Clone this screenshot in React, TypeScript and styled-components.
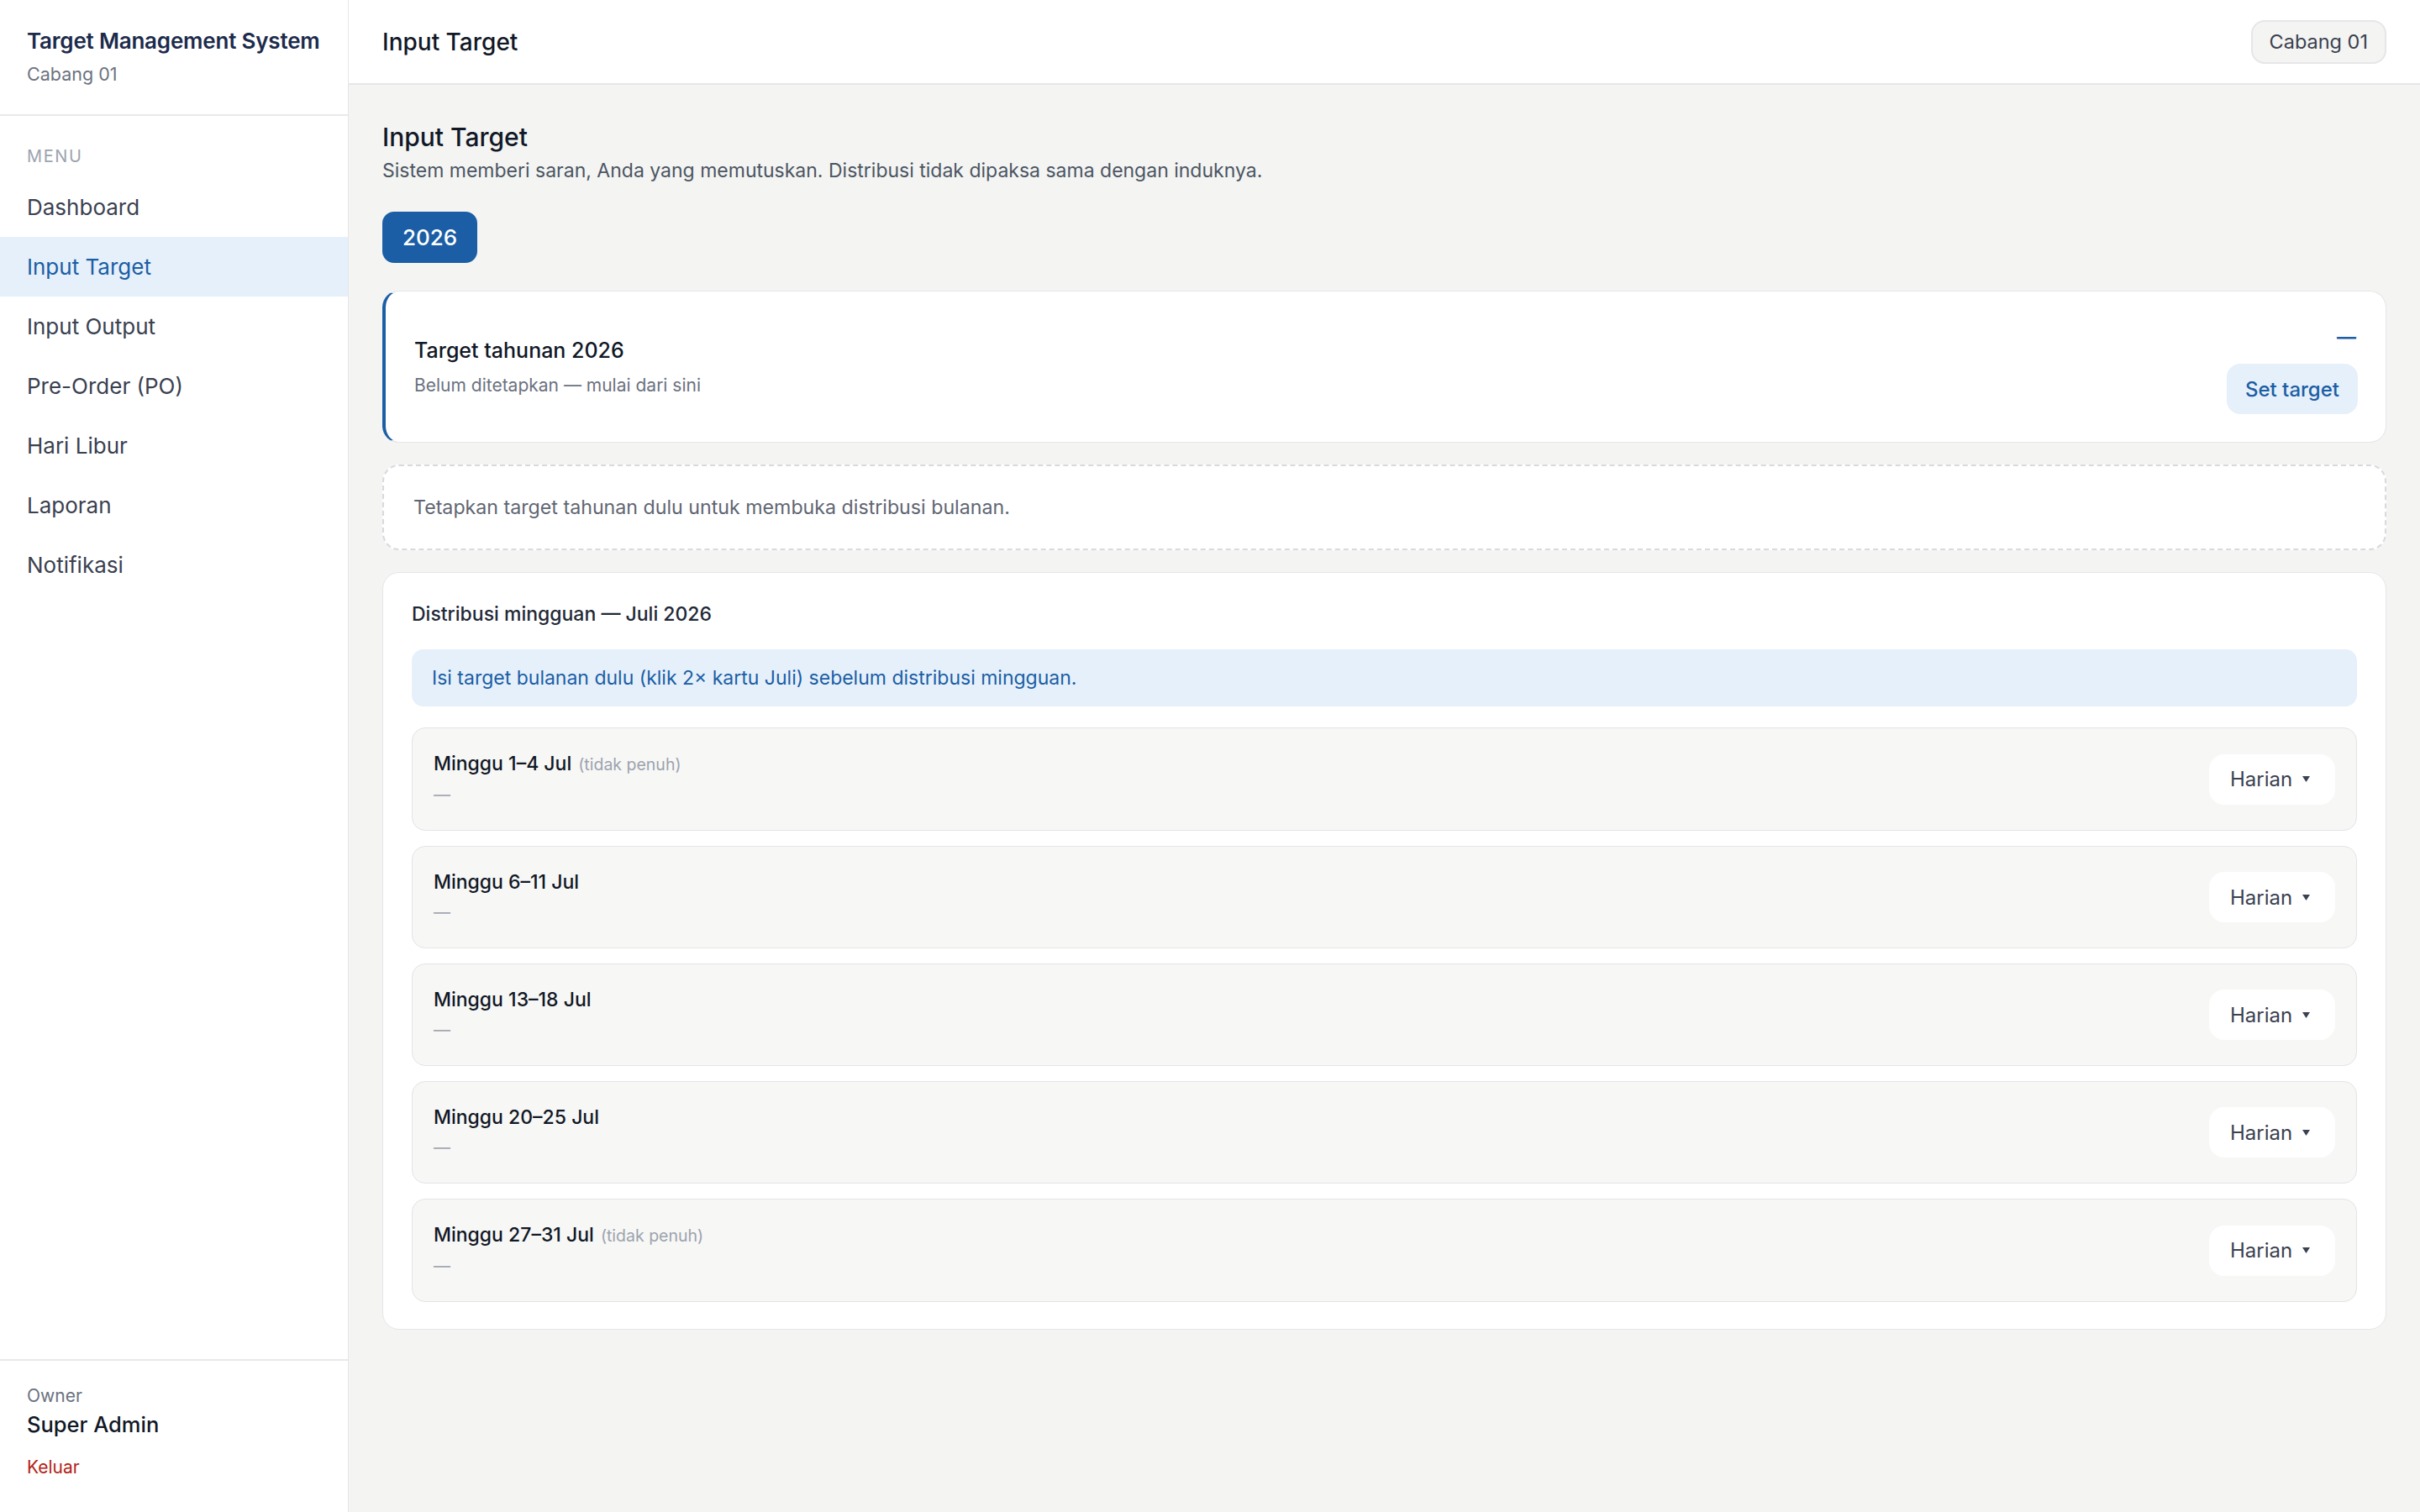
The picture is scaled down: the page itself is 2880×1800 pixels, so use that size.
import styled, { createGlobalStyle } from 'styled-components';

const GlobalStyle = createGlobalStyle`
  html, body {
    margin: 0;
    padding: 0;
    background: #f4f4f2;
  }
  * {
    box-sizing: border-box;
  }
`;

const Page = styled.div`
  display: flex;
  flex-direction: row;
  height: 100vh;
  width: 100vw;
  overflow: hidden;
  background-color: #f4f4f2;
  font-family: 'Inter', 'Liberation Sans', sans-serif;
  color: #111827;
  -webkit-font-smoothing: antialiased;
`;

/* ---------- sidebar ---------- */

const Sidebar = styled.aside`
  width: 415px;
  flex-shrink: 0;
  display: flex;
  flex-direction: column;
  background: #fff;
  border-right: 1px solid #e6e6ea;
`;

const Brand = styled.div`
  display: flex;
  flex-direction: column;
  gap: 7px;
  padding: 32px 32px 33px;
  border-bottom: 2px solid #e9e9ed;
`;

const BrandTitle = styled.div`
  font-size: 26px;
  line-height: 34px;
  font-weight: 600;
  color: #1c2b4b;
  letter-spacing: -0.2px;
`;

const BrandSub = styled.div`
  font-size: 21.5px;
  line-height: 30px;
  color: #6b7280;
`;

const Nav = styled.nav`
  display: flex;
  flex-direction: column;
  padding-top: 36px;
`;

const NavLabel = styled.div`
  padding: 0 32px;
  margin-bottom: 13px;
  font-size: 20px;
  line-height: 24px;
  letter-spacing: 1.6px;
  color: #9ca3af;
`;

const NavItem = styled.a<{ $active?: boolean }>`
  display: block;
  height: 71px;
  line-height: 71px;
  padding: 0 32px;
  font-size: 26px;
  text-decoration: none;
  color: ${(p) => (p.$active ? '#1b5ea5' : '#3a4150')};
  background: ${(p) => (p.$active ? '#e6f0fa' : 'transparent')};
  cursor: pointer;
`;

const UserBox = styled.div`
  margin-top: auto;
  display: flex;
  flex-direction: column;
  padding: 31px 32px 39px;
  border-top: 2px solid #e9e9ed;
`;

const UserRole = styled.div`
  font-size: 21px;
  line-height: 22px;
  color: #6b7280;
`;

const UserName = styled.div`
  margin-top: 6px;
  font-size: 25.5px;
  line-height: 34px;
  font-weight: 500;
  color: #111827;
`;

const Logout = styled.a`
  margin-top: 20px;
  font-size: 21px;
  line-height: 28px;
  color: #b42318;
  text-decoration: none;
  cursor: pointer;
`;

/* ---------- main ---------- */

const Main = styled.div`
  flex: 1;
  display: flex;
  flex-direction: column;
  min-width: 0;
`;

const Topbar = styled.header`
  height: 101px;
  flex-shrink: 0;
  display: flex;
  align-items: center;
  justify-content: space-between;
  padding: 0 40px;
  background: #fff;
  border-bottom: 2px solid #e6e6ea;
`;

const TopbarTitle = styled.div`
  font-size: 28px;
  font-weight: 500;
  color: #111827;
`;

const BranchPill = styled.div`
  height: 52px;
  padding: 0 20px;
  display: flex;
  align-items: center;
  border-radius: 16px;
  border: 2px solid #e6e6ea;
  background: #f4f4f2;
  font-size: 23.5px;
  color: #3a4150;
`;

const Content = styled.main`
  flex: 1;
  overflow: auto;
  padding: 42px 40px 40px;
  display: flex;
  flex-direction: column;
`;

const PageTitle = styled.h1`
  margin: 0;
  font-size: 30px;
  line-height: 40px;
  font-weight: 500;
  color: #111827;
`;

const PageSub = styled.p`
  margin: 4px 0 0;
  font-size: 23px;
  line-height: 32px;
  color: #4b5563;
`;

const YearRow = styled.div`
  display: flex;
  gap: 12px;
  margin: 33px 0 33px;
`;

const YearButton = styled.button<{ $active?: boolean }>`
  height: 61px;
  padding: 0 24px;
  border: 0;
  border-radius: 14px;
  font-family: inherit;
  font-size: 26px;
  font-weight: 500;
  color: ${(p) => (p.$active ? '#fff' : '#3a4150')};
  background: ${(p) => (p.$active ? '#1b5ea5' : '#fff')};
  cursor: pointer;
`;

const Stack = styled.div`
  display: flex;
  flex-direction: column;
  gap: 26px;
`;

const YearCard = styled.section`
  display: flex;
  align-items: center;
  justify-content: space-between;
  padding: 34px 33px 33px 34px;
  background: #fff;
  border: 1px solid #e6e6ea;
  border-left: 4px solid #1b5ea5;
  border-radius: 20px;
`;

const CardText = styled.div`
  display: flex;
  flex-direction: column;
  gap: 10px;
`;

const CardTitle = styled.div`
  font-size: 25px;
  line-height: 34px;
  font-weight: 500;
  color: #111827;
`;

const CardSub = styled.div`
  font-size: 21px;
  line-height: 30px;
  color: #6b7280;
`;

const CardAside = styled.div`
  display: flex;
  flex-direction: column;
  align-items: flex-end;
  gap: 12px;
`;

const TargetValue = styled.div`
  font-size: 23px;
  line-height: 40px;
  font-weight: 600;
  color: #1b5ea5;
  padding-right: 2px;
`;

const SoftButton = styled.button`
  height: 60px;
  padding: 0 22px;
  border: 0;
  border-radius: 16px;
  background: #e6f0fa;
  color: #1b5ea5;
  font-family: inherit;
  font-size: 24px;
  font-weight: 500;
  cursor: pointer;
`;

const EmptyNote = styled.div`
  padding: 34px 35px;
  background: #fff;
  border: 2px dashed #d9d9de;
  border-radius: 20px;
  font-size: 23.2px;
  line-height: 30px;
  color: #5f6673;
`;

const WeekCard = styled.section`
  display: flex;
  flex-direction: column;
  gap: 25px;
  padding: 32px 34px 32px;
  background: #fff;
  border: 1px solid #e6e6ea;
  border-radius: 20px;
`;

const SectionTitle = styled.div`
  font-size: 23px;
  line-height: 34px;
  font-weight: 500;
  color: #1f2937;
`;

const InfoBanner = styled.div`
  padding: 18px 24px;
  border-radius: 14px;
  background: #e6f0fa;
  font-size: 23px;
  line-height: 32px;
  color: #1b5ea5;
`;

const WeekList = styled.div`
  display: flex;
  flex-direction: column;
  gap: 18px;
`;

const WeekRow = styled.div`
  display: flex;
  align-items: center;
  justify-content: space-between;
  padding: 24px 25px;
  background: #f7f7f5;
  border: 1px solid #e4e4e8;
  border-radius: 16px;
`;

const WeekInfo = styled.div`
  display: flex;
  flex-direction: column;
`;

const WeekTitle = styled.div`
  font-size: 23px;
  line-height: 36px;
  font-weight: 500;
  color: #111827;
`;

const WeekNote = styled.span`
  margin-left: 8px;
  font-size: 19.5px;
  font-weight: 400;
  color: #9ca3af;
`;

const WeekValue = styled.div`
  font-size: 20px;
  line-height: 36px;
  color: #a3a8b2;
`;

const ModeSelect = styled.button`
  height: 60px;
  width: 150px;
  padding: 0 30px 0 25px;
  display: flex;
  align-items: center;
  justify-content: space-between;
  border: 0;
  border-radius: 18px;
  background: #fff;
  font-family: inherit;
  font-size: 24px;
  color: #3a4150;
  cursor: pointer;
`;

const Caret = () => (
  <svg width="9" height="7" viewBox="0 0 9 7">
    <polygon points="0,0 9,0 4.5,7" fill="#3a4150" />
  </svg>
);

const menu = [
  'Dashboard',
  'Input Target',
  'Input Output',
  'Pre-Order (PO)',
  'Hari Libur',
  'Laporan',
  'Notifikasi',
];

const weeks = [
  { label: 'Minggu 1–4 Jul', partial: true },
  { label: 'Minggu 6–11 Jul', partial: false },
  { label: 'Minggu 13–18 Jul', partial: false },
  { label: 'Minggu 20–25 Jul', partial: false },
  { label: 'Minggu 27–31 Jul', partial: true },
];

export default function App() {
  return (
    <Page>
      <GlobalStyle />
      <Sidebar>
        <Brand>
          <BrandTitle>Target Management System</BrandTitle>
          <BrandSub>Cabang 01</BrandSub>
        </Brand>
        <Nav>
          <NavLabel>MENU</NavLabel>
          {menu.map((item) => (
            <NavItem key={item} $active={item === 'Input Target'}>
              {item}
            </NavItem>
          ))}
        </Nav>
        <UserBox>
          <UserRole>Owner</UserRole>
          <UserName>Super Admin</UserName>
          <Logout>Keluar</Logout>
        </UserBox>
      </Sidebar>

      <Main>
        <Topbar>
          <TopbarTitle>Input Target</TopbarTitle>
          <BranchPill>Cabang 01</BranchPill>
        </Topbar>

        <Content>
          <PageTitle>Input Target</PageTitle>
          <PageSub>
            Sistem memberi saran, Anda yang memutuskan. Distribusi tidak dipaksa
            sama dengan induknya.
          </PageSub>

          <YearRow>
            <YearButton $active>2026</YearButton>
          </YearRow>

          <Stack>
            <YearCard>
              <CardText>
                <CardTitle>Target tahunan 2026</CardTitle>
                <CardSub>Belum ditetapkan — mulai dari sini</CardSub>
              </CardText>
              <CardAside>
                <TargetValue>—</TargetValue>
                <SoftButton>Set target</SoftButton>
              </CardAside>
            </YearCard>

            <EmptyNote>
              Tetapkan target tahunan dulu untuk membuka distribusi bulanan.
            </EmptyNote>

            <WeekCard>
              <SectionTitle>Distribusi mingguan — Juli 2026</SectionTitle>
              <InfoBanner>
                Isi target bulanan dulu (klik 2× kartu Juli) sebelum distribusi
                mingguan.
              </InfoBanner>
              <WeekList>
                {weeks.map((w) => (
                  <WeekRow key={w.label}>
                    <WeekInfo>
                      <WeekTitle>
                        {w.label}
                        {w.partial && <WeekNote>(tidak penuh)</WeekNote>}
                      </WeekTitle>
                      <WeekValue>—</WeekValue>
                    </WeekInfo>
                    <ModeSelect>
                      Harian
                      <Caret />
                    </ModeSelect>
                  </WeekRow>
                ))}
              </WeekList>
            </WeekCard>
          </Stack>
        </Content>
      </Main>
    </Page>
  );
}
